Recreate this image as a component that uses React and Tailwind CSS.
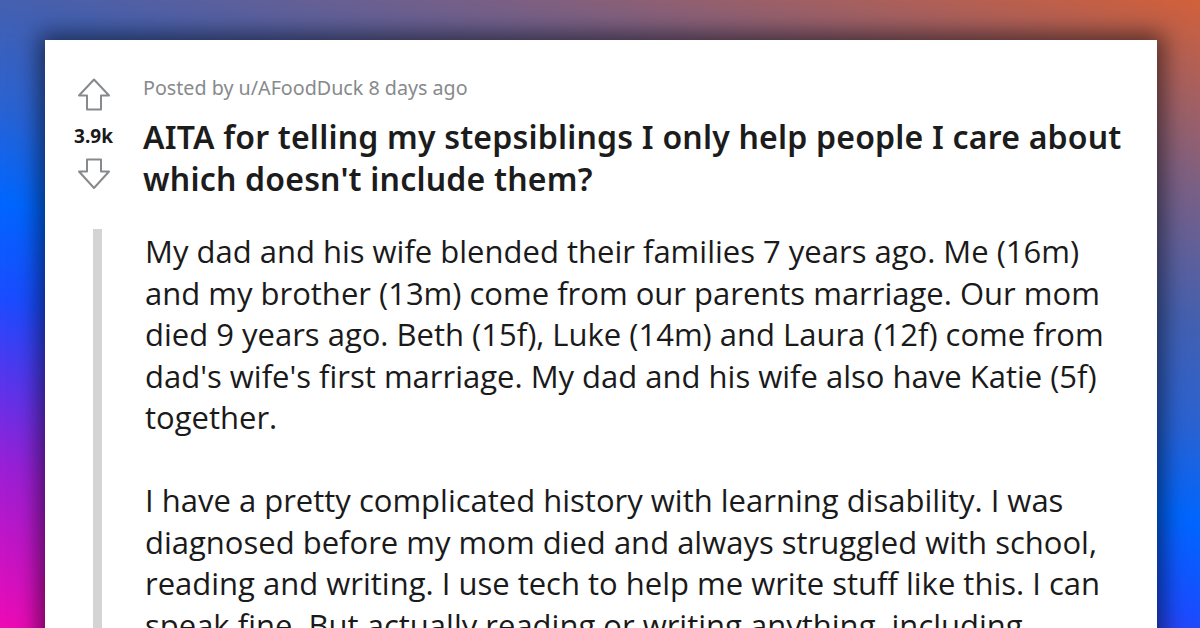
import React from "react";

const UpArrow = () => (
  <svg width="34" height="34" viewBox="0 0 34 34" fill="none">
    <path
      d="M17 1.5 L32 17.5 H24 V31.5 H10 V17.5 H2 Z"
      stroke="#878a8c"
      strokeWidth="2"
      strokeLinejoin="round"
    />
  </svg>
);

const DownArrow = () => (
  <svg width="34" height="32" viewBox="0 0 34 32" fill="none">
    <path
      d="M10 1.5 H24 V13.5 H32 L17 30 L2 13.5 H10 Z"
      stroke="#878a8c"
      strokeWidth="2"
      strokeLinejoin="round"
    />
  </svg>
);

const App = () => {
  return (
    <div className="w-[1200px] h-[628px] overflow-hidden bg-[linear-gradient(15deg,#ee0ab5_0%,#9a1fd5_17%,#4a3af0_28%,#1a4cff_35%,#0066ff_45%,#2a62d2_55%,#4460b0_66%,#7a6085_80%,#d2603a_100%)] pt-[40px] pl-[45px] pr-[43px]">
      <div className="bg-white h-[640px] shadow-[0_0_22px_6px_rgba(0,0,0,0.55)]">
        <div className="flex">
          <div className="w-[98px] flex flex-col items-center pt-[38px] pr-[1px]">
            <UpArrow />
            <div className="mt-[12px] text-[19px] leading-[24px] font-bold text-[#1a1a1b] font-['Noto_Sans',sans-serif]">
              3.9k
            </div>
            <div className="mt-[10px]">
              <DownArrow />
            </div>
          </div>
          <div className="pt-[35px] flex-1 pr-[20px]">
            <div className="text-[19.7px] leading-[26px] text-[#878a8c] font-['Noto_Sans',sans-serif]">
              Posted by u/AFoodDuck 8 days ago
            </div>
            <h1 className="mt-[15px] text-[32px] leading-[42px] font-semibold tracking-[0.2px] text-[#1c1c1c] font-['Noto_Sans',sans-serif]">
              AITA for telling my stepsiblings I only help people I care about which doesn't include them?
            </h1>
          </div>
        </div>
        <div className="mt-[29px] ml-[48px] border-l-[9px] border-[#d4d4d4] pl-[43px] pr-[40px] pt-[2px] text-[31px] leading-[41.5px] text-[#1a1a1b] font-['Open_Sans',sans-serif]">
          <p>
            My dad and his wife blended their families 7 years ago. Me (16m) and my brother (13m) come from our parents marriage. Our mom died 9 years ago. Beth (15f), Luke (14m) and Laura (12f) come from dad's wife's first marriage. My dad and his wife also have Katie (5f) together.
          </p>
          <p className="mt-[41.5px]">
            I have a pretty complicated history with learning disability. I was diagnosed before my mom died and always struggled with school, reading and writing. I use tech to help me write stuff like this. I can speak fine. But actually reading or writing anything, including homework, is really hard for me.
          </p>
        </div>
      </div>
    </div>
  );
};

export default App;
